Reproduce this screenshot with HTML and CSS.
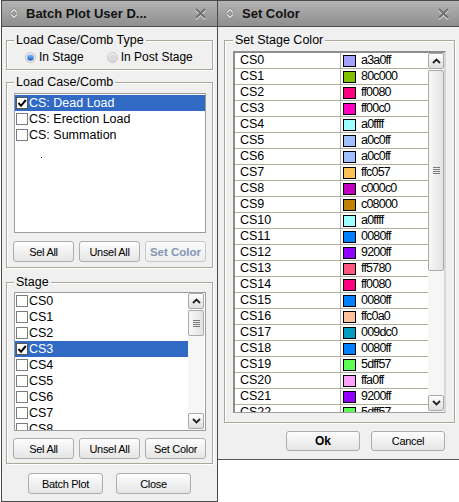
FILE: index.html
```html
<!DOCTYPE html>
<html>
<head>
<meta charset="utf-8">
<link rel="stylesheet" href="styles.css">
</head>
<body>
<div class="app">
  <section class="panel panel-left">
    <header class="titlebar">
      <svg class="ticon" width="8" height="11" viewBox="0 0 8 11"><path d="M1 4.5 L4 1.5 L7 4.5 M1 6.5 L4 9.5 L7 6.5" fill="none" stroke="#7c7c7c" stroke-width="2.6"/><path d="M1 4.5 L4 1.5 L7 4.5 M1 6.5 L4 9.5 L7 6.5" fill="none" stroke="#e4e4e4" stroke-width="1.3"/></svg>
      <span class="ttext">Batch Plot User D...</span>
      <svg class="tclose" width="11" height="12" viewBox="0 0 11 12"><path d="M1 2 L10 11 M10 2 L1 11" stroke="#efefef" stroke-width="2"/><path d="M1 1 L10 10 M10 1 L1 10" stroke="#707070" stroke-width="2"/></svg>
    </header>

    <div class="group g-type">
      <div class="gtitle">Load Case/Comb Type</div>
      <div class="radios">
        <label class="radio">
          <svg class="rdot" width="11" height="11" viewBox="0 0 11 11"><defs><linearGradient id="rbOn" x1="0" y1="0" x2="0" y2="1"><stop offset="0" stop-color="#8cc6ff"/><stop offset="1" stop-color="#1657c4"/></linearGradient></defs><circle cx="5.5" cy="5.5" r="5" fill="#f3f3f3" stroke="#bdbdbd"/><circle cx="5.5" cy="5.5" r="3.3" fill="url(#rbOn)"/></svg>
          In Stage
        </label>
        <label class="radio">
          <svg class="rdot" width="11" height="11" viewBox="0 0 11 11"><defs><linearGradient id="rbOff" x1="0" y1="0" x2="0" y2="1"><stop offset="0" stop-color="#f6f6f6"/><stop offset="1" stop-color="#d2d2d2"/></linearGradient></defs><circle cx="5.5" cy="5.5" r="5" fill="url(#rbOff)" stroke="#c6c6c6"/><circle cx="5.5" cy="5.5" r="3" fill="#dadada"/></svg>
          In Post Stage
        </label>
      </div>
    </div>

    <div class="group g-load">
      <div class="gtitle">Load Case/Comb</div>
      <div class="list list-load">
        <div class="item sel"><span class="cb"><svg width="10" height="10" viewBox="0 0 10 10"><path d="M1.5 5 L4 7.8 L8.8 2" fill="none" stroke="#000" stroke-width="2"/></svg></span>CS: Dead Load</div>
        <div class="item"><span class="cb"></span>CS: Erection Load</div>
        <div class="item"><span class="cb"></span>CS: Summation</div>
        <div class="item"><span class="dot"></span></div>
      </div>
      <div class="btnrow">
        <button class="btn">Sel All</button>
        <button class="btn">Unsel All</button>
        <button class="btn btn-disabled">Set Color</button>
      </div>
    </div>

    <div class="group g-stage">
      <div class="gtitle">Stage</div>
      <div class="list list-stage">
        <div class="rows">
          <div class="item"><span class="cb"></span>CS0</div>
          <div class="item"><span class="cb"></span>CS1</div>
          <div class="item"><span class="cb"></span>CS2</div>
          <div class="item sel"><span class="cb"><svg width="10" height="10" viewBox="0 0 10 10"><path d="M1.5 5 L4 7.8 L8.8 2" fill="none" stroke="#000" stroke-width="2"/></svg></span>CS3</div>
          <div class="item"><span class="cb"></span>CS4</div>
          <div class="item"><span class="cb"></span>CS5</div>
          <div class="item"><span class="cb"></span>CS6</div>
          <div class="item"><span class="cb"></span>CS7</div>
          <div class="item"><span class="cb"></span>CS8</div>
        </div>
        <div class="vs vs-stage">
          <div class="vs-btn"><svg width="9" height="6" viewBox="0 0 9 6"><path d="M1 5 L4.5 1.5 L8 5" fill="none" stroke="#222" stroke-width="1.8"/></svg></div>
          <div class="vs-thumb thumb-stage"><span class="grip"></span></div>
          <div class="vs-fill"></div>
          <div class="vs-btn down"><svg width="9" height="6" viewBox="0 0 9 6"><path d="M1 1 L4.5 4.5 L8 1" fill="none" stroke="#222" stroke-width="1.8"/></svg></div>
        </div>
      </div>
      <div class="btnrow">
        <button class="btn">Sel All</button>
        <button class="btn">Unsel All</button>
        <button class="btn">Set Color</button>
      </div>
    </div>

    <div class="footer">
      <button class="btn btn-wide">Batch Plot</button>
      <button class="btn btn-wide">Close</button>
    </div>
  </section>

  <section class="panel panel-right">
    <header class="titlebar">
      <svg class="ticon" width="8" height="11" viewBox="0 0 8 11"><path d="M1 4.5 L4 1.5 L7 4.5 M1 6.5 L4 9.5 L7 6.5" fill="none" stroke="#7c7c7c" stroke-width="2.6"/><path d="M1 4.5 L4 1.5 L7 4.5 M1 6.5 L4 9.5 L7 6.5" fill="none" stroke="#e4e4e4" stroke-width="1.3"/></svg>
      <span class="ttext">Set Color</span>
      <svg class="tclose tclose-r" width="11" height="12" viewBox="0 0 11 12"><path d="M1 2 L10 11 M10 2 L1 11" stroke="#efefef" stroke-width="2"/><path d="M1 1 L10 10 M10 1 L1 10" stroke="#707070" stroke-width="2"/></svg>
    </header>

    <div class="group g-color">
      <div class="gtitle">Set Stage Color</div>
      <div class="tbl">
        <div class="trows">
          <div class="trow"><span class="c1">CS0</span><span class="c2"><span class="sw" style="background:#a3a0ff"></span><span class="hex">a3a0ff</span></span></div>
          <div class="trow"><span class="c1">CS1</span><span class="c2"><span class="sw" style="background:#80c000"></span><span class="hex">80c000</span></span></div>
          <div class="trow"><span class="c1">CS2</span><span class="c2"><span class="sw" style="background:#ff0080"></span><span class="hex">ff0080</span></span></div>
          <div class="trow"><span class="c1">CS3</span><span class="c2"><span class="sw" style="background:#ff00c0"></span><span class="hex">ff00c0</span></span></div>
          <div class="trow"><span class="c1">CS4</span><span class="c2"><span class="sw" style="background:#a0ffff"></span><span class="hex">a0ffff</span></span></div>
          <div class="trow"><span class="c1">CS5</span><span class="c2"><span class="sw" style="background:#a0c0ff"></span><span class="hex">a0c0ff</span></span></div>
          <div class="trow"><span class="c1">CS6</span><span class="c2"><span class="sw" style="background:#a0c0ff"></span><span class="hex">a0c0ff</span></span></div>
          <div class="trow"><span class="c1">CS7</span><span class="c2"><span class="sw" style="background:#ffc057"></span><span class="hex">ffc057</span></span></div>
          <div class="trow"><span class="c1">CS8</span><span class="c2"><span class="sw" style="background:#c000c0"></span><span class="hex">c000c0</span></span></div>
          <div class="trow"><span class="c1">CS9</span><span class="c2"><span class="sw" style="background:#c08000"></span><span class="hex">c08000</span></span></div>
          <div class="trow"><span class="c1">CS10</span><span class="c2"><span class="sw" style="background:#a0ffff"></span><span class="hex">a0ffff</span></span></div>
          <div class="trow"><span class="c1">CS11</span><span class="c2"><span class="sw" style="background:#0080ff"></span><span class="hex">0080ff</span></span></div>
          <div class="trow"><span class="c1">CS12</span><span class="c2"><span class="sw" style="background:#9200ff"></span><span class="hex">9200ff</span></span></div>
          <div class="trow"><span class="c1">CS13</span><span class="c2"><span class="sw" style="background:#ff5780"></span><span class="hex">ff5780</span></span></div>
          <div class="trow"><span class="c1">CS14</span><span class="c2"><span class="sw" style="background:#ff0080"></span><span class="hex">ff0080</span></span></div>
          <div class="trow"><span class="c1">CS15</span><span class="c2"><span class="sw" style="background:#0080ff"></span><span class="hex">0080ff</span></span></div>
          <div class="trow"><span class="c1">CS16</span><span class="c2"><span class="sw" style="background:#ffc0a0"></span><span class="hex">ffc0a0</span></span></div>
          <div class="trow"><span class="c1">CS17</span><span class="c2"><span class="sw" style="background:#009dc0"></span><span class="hex">009dc0</span></span></div>
          <div class="trow"><span class="c1">CS18</span><span class="c2"><span class="sw" style="background:#0080ff"></span><span class="hex">0080ff</span></span></div>
          <div class="trow"><span class="c1">CS19</span><span class="c2"><span class="sw" style="background:#5dff57"></span><span class="hex">5dff57</span></span></div>
          <div class="trow"><span class="c1">CS20</span><span class="c2"><span class="sw" style="background:#ffa0ff"></span><span class="hex">ffa0ff</span></span></div>
          <div class="trow"><span class="c1">CS21</span><span class="c2"><span class="sw" style="background:#9200ff"></span><span class="hex">9200ff</span></span></div>
          <div class="trow"><span class="c1">CS22</span><span class="c2"><span class="sw" style="background:#5dff57"></span><span class="hex">5dff57</span></span></div>
        </div>
        <div class="vs vs-table">
          <div class="vs-btn"><svg width="9" height="6" viewBox="0 0 9 6"><path d="M1 5 L4.5 1.5 L8 5" fill="none" stroke="#222" stroke-width="1.8"/></svg></div>
          <div class="vs-thumb thumb-table"><span class="grip"></span></div>
          <div class="vs-fill"></div>
          <div class="vs-btn down"><svg width="9" height="6" viewBox="0 0 9 6"><path d="M1 1 L4.5 4.5 L8 1" fill="none" stroke="#222" stroke-width="1.8"/></svg></div>
        </div>
      </div>
    </div>

    <div class="dlgbtns">
      <button class="btn btn-dlg btn-ok">Ok</button>
      <button class="btn btn-dlg">Cancel</button>
    </div>
  </section>
</div>
</body>
</html>
```

FILE: styles.css
```css
* { box-sizing: border-box; }
html, body { margin: 0; padding: 0; }
body {
  background: #fff;
  width: 459px;
  height: 502px;
  overflow: hidden;
  font-family: "Liberation Sans", Arial, sans-serif;
  font-size: 12.5px;
  color: #000;
}
.app { display: flex; align-items: flex-start; }

.panel {
  background: #f0f0f0;
  display: flex;
  flex-direction: column;
}
.panel-left {
  margin-left: 1px;
  width: 217px;
  height: 502px;
  border: 1px solid #4a4a4a;
}
.panel-right {
  width: 241px;
  height: 460px;
  border-top: 1px solid #4a4a4a;
  border-bottom: 1px solid #555;
}

/* title bar */
.titlebar {
  height: 26px;
  flex: none;
  display: flex;
  align-items: center;
  background: linear-gradient(#b4b4b4, #8e8e8e);
  border-bottom: 1px solid #4f4f4f;
}
.ticon { margin-left: 8px; flex: none; }
.ttext {
  margin-left: 8px;
  flex: 1;
  font-weight: bold;
  font-size: 13px;
  color: #121212;
  white-space: nowrap;
}
.tclose { margin-right: 11px; flex: none; }
.tclose-r { margin-right: 10px; }

/* group boxes */
.group {
  flex: none;
  display: flex;
  flex-direction: column;
  border: 1px solid #aca899;
  box-shadow: inset 1px 1px 0 #fff, 1px 1px 0 #fff;
  margin: 13px 4px 0 4px;
  padding: 0 6px 4px 7px;
}
.gtitle {
  align-self: flex-start;
  margin-top: -9px;
  height: 16px;
  line-height: 16px;
  padding: 0 2px;
  background: #f0f0f0;
  white-space: nowrap;
}
.g-load { margin-top: 12px; padding-bottom: 5px; }
.g-stage { margin-top: 14px; }
.g-color {
  margin: 13px 4px 0 6px;
  padding: 0 8px 9px 8px;
}

/* radios */
.radios {
  display: flex;
  align-items: center;
  height: 16px;
  margin-top: 1px;
  padding-left: 11px;
  font-size: 12px;
}
.radio { display: flex; align-items: center; white-space: nowrap; }
.radio + .radio { margin-left: 23px; }
.rdot { margin-right: 3px; flex: none; }

/* lists */
.list {
  background: #fff;
  border: 1px solid #9c9c9c;
  overflow: hidden;
}
.list-load {
  margin-top: 3px;
  height: 140px;
  padding-top: 1px;
}
.list-stage {
  margin-top: 2px;
  height: 139px;
  display: flex;
}
.list-stage .rows { flex: 1; overflow: hidden; }
.item {
  height: 16px;
  line-height: 16px;
  display: flex;
  align-items: center;
  white-space: nowrap;
}
.item.sel { background: #316ac5; color: #fff; }
.cb {
  width: 12px;
  height: 12px;
  margin: 0 1px 0 1px;
  border: 1px solid #7b7b7b;
  background: #fff;
  display: flex;
  align-items: center;
  justify-content: center;
  flex: none;
}
.item.sel .cb { border-color: #555; }
.dot {
  width: 1px;
  height: 1px;
  background: #000;
  margin: 13px 0 0 26px;
}

/* scrollbars */
.vs {
  width: 16px;
  flex: none;
  display: flex;
  flex-direction: column;
  background: #f6f6f6;
}
.vs-stage { margin-right: 1px; }
.vs-btn {
  height: 16px;
  flex: none;
  border: 1px solid #a9a9a9;
  border-radius: 2px;
  background: linear-gradient(#fefefe, #dedede);
  display: flex;
  align-items: center;
  justify-content: center;
}
.vs-btn.down { margin-bottom: 1px; }
.vs-thumb {
  flex: none;
  margin-top: 1px;
  border: 1px solid #aaa;
  border-radius: 2px;
  background: linear-gradient(90deg, #f8f8f8, #e2e2e2);
  display: flex;
  align-items: center;
  justify-content: center;
}
.thumb-stage { height: 26px; }
.thumb-table { height: 201px; }
.vs-fill { flex: 1; }
.grip {
  width: 7px;
  height: 7px;
  background: repeating-linear-gradient(#7a7a7a 0 1px, transparent 1px 2px);
}

/* buttons */
.btn {
  height: 21px;
  width: 61px;
  padding: 0;
  border: 1px solid #adadad;
  border-radius: 3px;
  background: linear-gradient(#fdfdfd, #e5e5e5);
  font-family: "Liberation Sans", Arial, sans-serif;
  font-size: 11px;
  letter-spacing: -0.3px;
  color: #000;
}
.btn-disabled {
  border-color: #c8c8c8;
  background: linear-gradient(#fafafa, #eeeeee);
  color: #8595b5;
  font-weight: bold;
  font-size: 11.5px;
  letter-spacing: 0;
}
.btnrow {
  display: flex;
  gap: 5px;
  margin: 8px 0 0 -1px;
}
.g-stage .btnrow { margin-top: 7px; }
.footer {
  display: flex;
  justify-content: center;
  gap: 13px;
  margin-top: 9px;
}
.btn-wide { width: 75px; }

/* color table */
.tbl {
  margin-top: 3px;
  height: 362px;
  display: flex;
  background: #fff;
  border-style: solid;
  border-width: 2px 2px 1px 2px;
  border-color: #8e8e8e #d6d6d6 #a0a0a0 #8e8e8e;
  overflow: hidden;
}
.trows { flex: 1; overflow: hidden; }
.trow {
  display: flex;
  height: 16px;
  border-bottom: 1px solid #b2ae9e;
}
.c1 {
  width: 106px;
  flex: none;
  padding-left: 5px;
  line-height: 15px;
  border-right: 1px solid #b2ae9e;
}
.c2 {
  flex: 1;
  display: flex;
  align-items: center;
  padding-left: 2px;
}
.sw {
  width: 13px;
  height: 12px;
  border: 1px solid #000;
  margin-right: 5px;
  flex: none;
}
.hex { letter-spacing: -0.8px; line-height: 15px; }

.dlgbtns {
  display: flex;
  justify-content: flex-end;
  gap: 11px;
  margin: 8px 14px 0 0;
}
.btn-dlg { width: 74px; height: 20px; }
.btn-ok { font-weight: bold; font-size: 12px; letter-spacing: 0; }
```
